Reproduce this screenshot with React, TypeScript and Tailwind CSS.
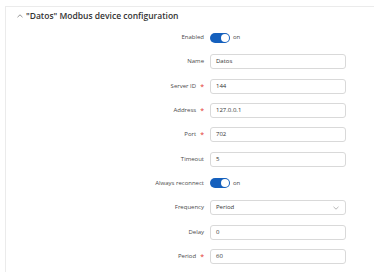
import React from "react";

const font = { fontFamily: '"Open Sans", "Noto Sans", sans-serif' };

function Label({ text, required }: { text: string; required?: boolean }) {
  return (
    <div className="w-[198px] shrink-0 flex justify-end items-center pr-[6px] text-[6px] text-[#4a4a4a]">
      <span>{text}</span>
      {required && <span className="text-[#e3342f] ml-[4px] text-[7px] leading-none">*</span>}
    </div>
  );
}

function Toggle() {
  return (
    <div className="flex items-center">
      <div className="w-[20px] h-[10px] rounded-full bg-[#1560bd] flex items-center justify-end pr-[1px]">
        <div className="w-[8px] h-[8px] rounded-full bg-white" />
      </div>
      <span className="ml-[3px] text-[6px] text-[#4a4a4a]">on</span>
    </div>
  );
}

function Input({ value }: { value: string }) {
  return (
    <div className="w-[136px] h-[15px] border border-[#d9d9d9] rounded-[3px] bg-white flex items-center pl-[5px] text-[6px] text-[#333]">
      {value}
    </div>
  );
}

function Select({ value }: { value: string }) {
  return (
    <div className="w-[136px] h-[15px] border border-[#d9d9d9] rounded-[3px] bg-white flex items-center justify-between pl-[5px] pr-[6px] text-[6px] text-[#333]">
      <span>{value}</span>
      <svg width="6" height="4" viewBox="0 0 6 4" fill="none">
        <path d="M0.5 0.8 L3 3.2 L5.5 0.8" stroke="#9a9a9a" strokeWidth="0.7" />
      </svg>
    </div>
  );
}

function Row({ children }: { children: React.ReactNode }) {
  return <div className="h-[24.3px] flex items-center">{children}</div>;
}

export default function App() {
  return (
    <div className="w-[374px] h-[272px] bg-white overflow-hidden" style={font}>
      <div className="ml-[5px] mt-[6px] border-l border-t border-[#ebebeb] h-[266px] pl-[6px]">
        <div className="flex items-center h-[18px] pl-[5px]">
          <svg width="6" height="4" viewBox="0 0 6 4" fill="none" className="mr-[3px]">
            <path d="M0.5 3.2 L3 0.8 L5.5 3.2" stroke="#666" strokeWidth="0.7" />
          </svg>
          <span className="text-[8.5px] font-semibold text-[#333]">"Datos" Modbus device configuration</span>
        </div>
        <div className="mt-[0.5px]">
          <Row><Label text="Enabled" /><Toggle /></Row>
          <Row><Label text="Name" /><Input value="Datos" /></Row>
          <Row><Label text="Server ID" required /><Input value="144" /></Row>
          <Row><Label text="Address" required /><Input value="127.0.0.1" /></Row>
          <Row><Label text="Port" required /><Input value="702" /></Row>
          <Row><Label text="Timeout" /><Input value="5" /></Row>
          <Row><Label text="Always reconnect" /><Toggle /></Row>
          <Row><Label text="Frequency" /><Select value="Period" /></Row>
          <Row><Label text="Delay" /><Input value="0" /></Row>
          <Row><Label text="Period" required /><Input value="60" /></Row>
        </div>
      </div>
    </div>
  );
}
